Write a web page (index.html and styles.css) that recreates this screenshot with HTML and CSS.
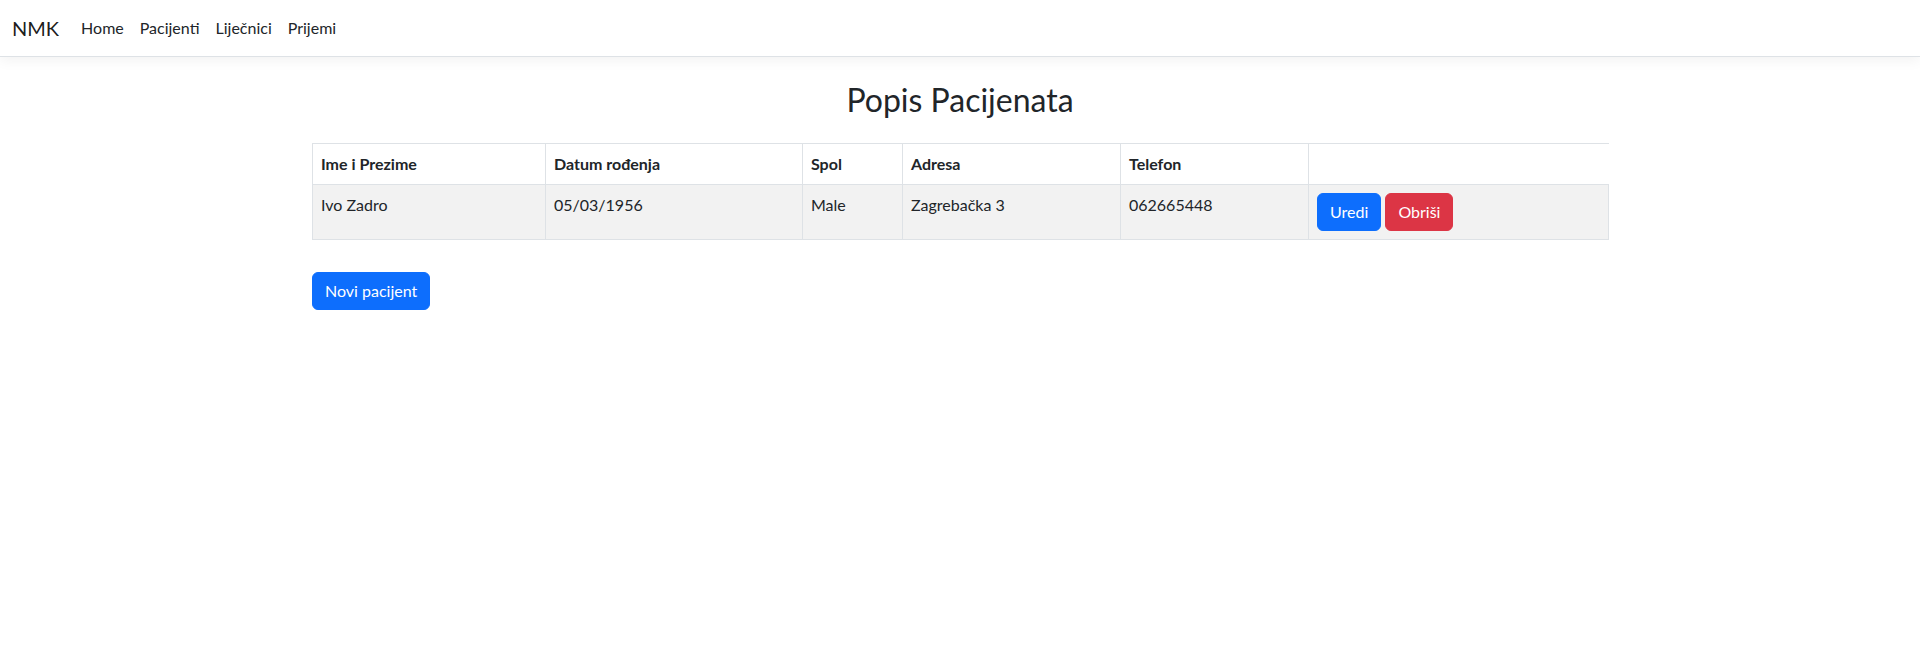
FILE: index.html
```html
<!DOCTYPE html>
<html lang="hr">
<head>
<meta charset="utf-8">
<title>Pacijenti - NMK</title>
<link rel="stylesheet" href="styles.css">
</head>
<body>
<header>
  <nav class="navbar">
    <div class="navbar-inner">
      <a class="brand" href="#">NMK</a>
      <ul class="nav">
        <li><a class="nav-link" href="#">Home</a></li>
        <li><a class="nav-link" href="#">Pacijenti</a></li>
        <li><a class="nav-link" href="#">Liječnici</a></li>
        <li><a class="nav-link" href="#">Prijemi</a></li>
      </ul>
    </div>
  </nav>
</header>
<div class="container">
  <main class="main">
    <h2 class="title">Popis Pacijenata</h2>
    <table class="table">
      <colgroup>
        <col class="c1"><col class="c2"><col class="c3"><col class="c4"><col class="c5"><col class="c6">
      </colgroup>
      <thead>
        <tr>
          <th>Ime i Prezime</th>
          <th>Datum rođenja</th>
          <th>Spol</th>
          <th>Adresa</th>
          <th>Telefon</th>
          <th class="last"></th>
        </tr>
      </thead>
      <tbody>
        <tr>
          <td>Ivo Zadro</td>
          <td>05/03/1956</td>
          <td>Male</td>
          <td>Zagrebačka 3</td>
          <td>062665448</td>
          <td class="actions">
            <a class="btn btn-primary" href="#">Uredi</a>
            <a class="btn btn-danger" href="#">Obriši</a>
          </td>
        </tr>
      </tbody>
    </table>
    <div class="new-row">
      <a class="btn btn-primary" href="#">Novi pacijent</a>
    </div>
  </main>
</div>
</body>
</html>
```

FILE: styles.css
```css
* {
  box-sizing: border-box;
}

html, body {
  margin: 0;
  padding: 0;
}

body {
  font-family: "Lato", "Open Sans", "Liberation Sans", sans-serif;
  font-size: 16px;
  line-height: 1.5;
  color: #212529;
  background: #fff;
}

a {
  text-decoration: none;
}

.navbar {
  background: #fff;
  border-bottom: 1px solid #dee2e6;
  box-shadow: 0 4px 12px rgba(0, 0, 0, 0.05);
  padding: 8px 0;
  margin-bottom: 16px;
}

.navbar-inner {
  display: flex;
  align-items: center;
  padding: 0 12px;
}

.brand {
  font-size: 20px;
  line-height: 30px;
  padding: 5px 0;
  margin-right: 14px;
  color: rgba(0, 0, 0, 0.9);
}

.nav {
  display: flex;
  list-style: none;
  margin: 0;
  padding: 0;
}

.nav-link {
  display: block;
  padding: 8px;
  color: #212529;
}

.container {
  max-width: 1320px;
  margin: 0 auto;
  padding: 0 12px;
}

.main {
  padding-top: 8px;
  padding-bottom: 16px;
}

.title {
  font-size: 32px;
  font-weight: 400;
  line-height: 1.2;
  text-align: center;
  margin: 0 0 24px;
}

.table {
  width: 100%;
  border-collapse: collapse;
  table-layout: fixed;
  margin-bottom: 32px;
  color: #212529;
}

.c1 { width: 233px; }
.c2 { width: 257px; }
.c3 { width: 100px; }
.c4 { width: 218px; }
.c5 { width: 188px; }
.c6 { width: 300px; }

.table th,
.table td {
  border: 1px solid #dee2e6;
  padding: 8px;
  text-align: left;
  vertical-align: top;
}

.table th {
  font-weight: 700;
}

.table th.last {
  border-right: 0;
}

.table tbody tr {
  background: #f2f2f2;
}

.actions {
  white-space: nowrap;
}

.btn {
  display: inline-block;
  padding: 6px 12px;
  font-size: 16px;
  line-height: 24px;
  border: 1px solid transparent;
  border-radius: 6px;
  color: #fff;
  vertical-align: middle;
}

.btn-primary {
  background: #0d6efd;
  border-color: #0d6efd;
}

.btn-danger {
  background: #dc3545;
  border-color: #dc3545;
}
```
